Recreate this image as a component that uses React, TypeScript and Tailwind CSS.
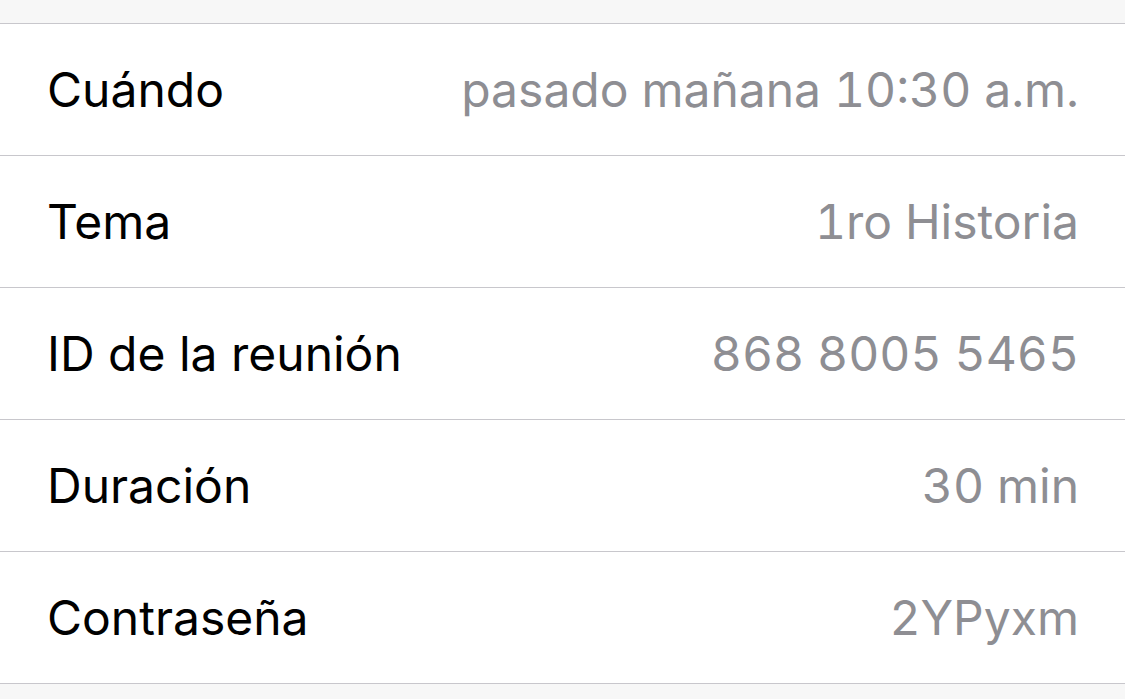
import React from "react";

const rows = [
  { label: "Cuándo", value: "pasado mañana 10:30 a.m." },
  { label: "Tema", value: "1ro Historia" },
  { label: "ID de la reunión", value: "868 8005 5465" },
  { label: "Duración", value: "30 min" },
  { label: "Contraseña", value: "2YPyxm" },
];

export default function App() {
  return (
    <div
      className="w-[1125px] h-[699px] bg-[#f7f7f7] overflow-hidden"
      style={{ fontFamily: "Inter, 'Noto Sans', sans-serif" }}
    >
      <div className="h-[23px]" />
      <div className="bg-white border-t border-[#c8c7cc]">
        {rows.map((r) => (
          <div
            key={r.label}
            className="h-[132px] border-b border-[#c8c7cc] flex items-center justify-between pl-[47px] pr-[46px] text-[48px] leading-none"
          >
            <span className="text-black">{r.label}</span>
            <span className="text-[#8e8e93] tabular-nums">{r.value}</span>
          </div>
        ))}
      </div>
    </div>
  );
}
